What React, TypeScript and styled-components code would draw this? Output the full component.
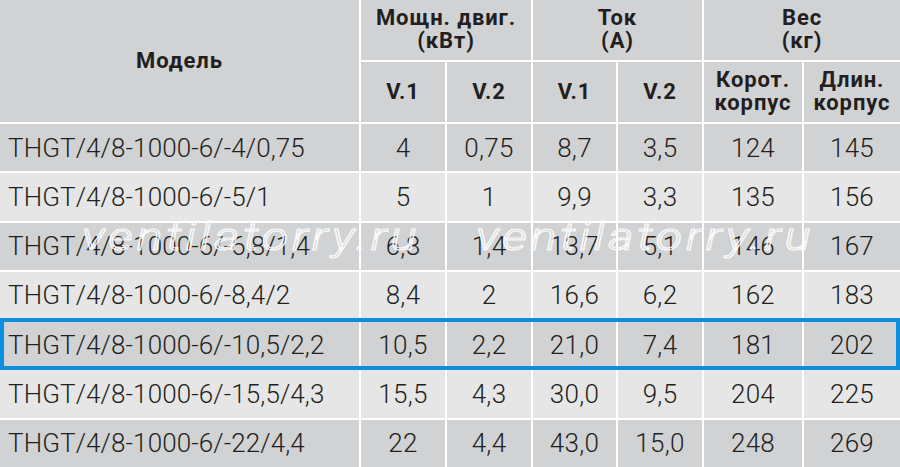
import React from 'react'
import styled, { createGlobalStyle } from 'styled-components'

const GlobalStyle = createGlobalStyle`
  html, body {
    margin: 0;
    padding: 0;
    background: #fff;
  }
  body {
    font-family: Roboto, "Liberation Sans", sans-serif;
    color: #231f20;
  }
`

const DARK = '#d1d2d4'
const LIGHT = '#e6e6e7'

type Row = {
  model: string
  values: string[]
  active?: boolean
}

const rows: Row[] = [
  { model: 'THGT/4/8-1000-6/-4/0,75', values: ['4', '0,75', '8,7', '3,5', '124', '145'] },
  { model: 'THGT/4/8-1000-6/-5/1', values: ['5', '1', '9,9', '3,3', '135', '156'] },
  { model: 'THGT/4/8-1000-6/-6,8/1,4', values: ['6,8', '1,4', '13,7', '5,1', '146', '167'] },
  { model: 'THGT/4/8-1000-6/-8,4/2', values: ['8,4', '2', '16,6', '6,2', '162', '183'] },
  { model: 'THGT/4/8-1000-6/-10,5/2,2', values: ['10,5', '2,2', '21,0', '7,4', '181', '202'], active: true },
  { model: 'THGT/4/8-1000-6/-15,5/4,3', values: ['15,5', '4,3', '30,0', '9,5', '204', '225'] },
  { model: 'THGT/4/8-1000-6/-22/4,4', values: ['22', '4,4', '43,0', '15,0', '248', '269'] }
]

const App = () => {
  return (
    <>
      <GlobalStyle />
      <Table>
        <HeadCell $rowSpan={2}>Модель</HeadCell>
        <HeadCell $colSpan={2}>Мощн. двиг.<br />(кВт)</HeadCell>
        <HeadCell $colSpan={2}>Ток<br />(A)</HeadCell>
        <HeadCell $colSpan={2}>Вес<br />(кг)</HeadCell>
        <HeadCell>V.1</HeadCell>
        <HeadCell>V.2</HeadCell>
        <HeadCell>V.1</HeadCell>
        <HeadCell>V.2</HeadCell>
        <HeadCell>Корот.<br />корпус</HeadCell>
        <HeadCell>Длин.<br />корпус</HeadCell>

        {rows.map((row, i) => (
          <React.Fragment key={row.model}>
            <ModelCell $bg={i % 2 === 0 ? DARK : LIGHT}>
              {row.model}
              {row.active && <Highlight />}
            </ModelCell>
            {row.values.map((v, j) => (
              <ValueCell key={j} $bg={i % 2 === 0 ? DARK : LIGHT}>{v}</ValueCell>
            ))}
          </React.Fragment>
        ))}

        <Watermark $left={82}>ventilatorry.ru</Watermark>
        <Watermark $left={476}>ventilatorry.ru</Watermark>
      </Table>
    </>
  )
}

export default App

const Table = styled.div`
  position: relative;
  width: 900px;
  height: 467px;
  display: grid;
  grid-template-columns: 359px 84px 84px 83px 84px 98px 96px;
  grid-template-rows: 60px 60px repeat(7, 1fr);
  gap: 2px;
  background: #fff;
  overflow: hidden;
`

const HeadCell = styled.div<{ $colSpan?: number, $rowSpan?: number }>`
  grid-column: span ${props => props.$colSpan || 1};
  grid-row: span ${props => props.$rowSpan || 1};
  background: ${DARK};
  display: flex;
  align-items: center;
  justify-content: center;
  text-align: center;
  font-weight: 700;
  font-size: 22px;
  line-height: 23px;
  letter-spacing: 0.9px;
  padding-bottom: 2px;
`

const ModelCell = styled.div<{ $bg: string }>`
  position: relative;
  background: ${props => props.$bg};
  display: flex;
  align-items: center;
  padding-left: 8px;
  font-size: 26px;
  font-weight: 300;
  letter-spacing: 0.1px;
  white-space: nowrap;
`

const ValueCell = styled.div<{ $bg: string }>`
  background: ${props => props.$bg};
  display: flex;
  align-items: center;
  justify-content: center;
  font-size: 26px;
  font-weight: 300;
  letter-spacing: 0.3px;
  white-space: nowrap;
`

const Highlight = styled.div`
  position: absolute;
  left: 0;
  top: -3px;
  bottom: -2px;
  width: 900px;
  box-sizing: border-box;
  border: 4px solid #0c8fde;
  pointer-events: none;
  z-index: 2;
`

const Watermark = styled.span<{ $left: number }>`
  position: absolute;
  top: 218px;
  left: ${props => props.$left}px;
  font-family: Roboto, "Liberation Sans", sans-serif;
  font-style: italic;
  font-weight: 300;
  font-size: 38px;
  line-height: 1;
  letter-spacing: 3px;
  color: transparent;
  -webkit-text-stroke: 1.2px rgba(255, 255, 255, 0.9);
  transform: scaleX(1.28);
  transform-origin: left center;
  white-space: nowrap;
  pointer-events: none;
  z-index: 1;
`
